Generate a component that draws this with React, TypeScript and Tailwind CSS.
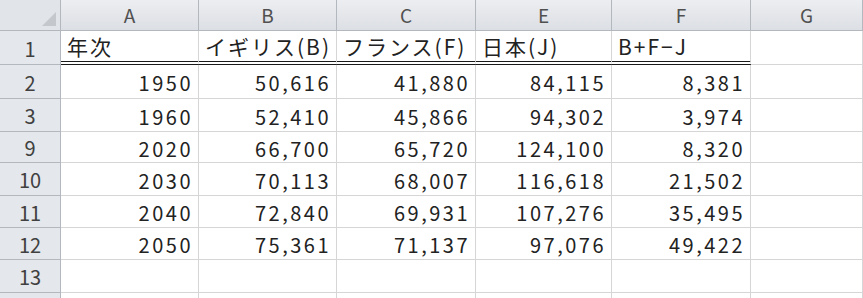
import React from 'react';

const cols = ['A', 'B', 'C', 'E', 'F', 'G'];

const header = ['年次', 'イギリス(B)', 'フランス(F)', '日本(J)', 'B+F−J', ''];

const rows: { n: string; h: string; cells: string[] }[] = [
  { n: '2', h: 'h-[34px]', cells: ['1950', '50,616', '41,880', '84,115', '8,381', ''] },
  { n: '3', h: 'h-[33px]', cells: ['1960', '52,410', '45,866', '94,302', '3,974', ''] },
  { n: '9', h: 'h-[31px]', cells: ['2020', '66,700', '65,720', '124,100', '8,320', ''] },
  { n: '10', h: 'h-[33px]', cells: ['2030', '70,113', '68,007', '116,618', '21,502', ''] },
  { n: '11', h: 'h-[32px]', cells: ['2040', '72,840', '69,931', '107,276', '35,495', ''] },
  { n: '12', h: 'h-[32px]', cells: ['2050', '75,361', '71,137', '97,076', '49,422', ''] },
  { n: '13', h: 'h-[33px]', cells: ['', '', '', '', '', ''] },
  { n: '', h: 'h-[33px]', cells: ['', '', '', '', '', ''] },
];

const widths = ['w-[138px]', 'w-[138px]', 'w-[139px]', 'w-[136px]', 'w-[139px]', 'flex-1'];

const RowHead = ({ label, h }: { label: string; h: string }) => (
  <div className={`${h} w-[61px] shrink-0 flex items-center justify-center pt-[2px] bg-[#e4e7eb] border-r border-b border-[#b3b8bf] text-[20px] text-[#404040]`}>
    {label}
  </div>
);

export default function App() {
  return (
    <div
      className="w-[863px] h-[298px] overflow-hidden bg-white text-[#222]"
      style={{ fontFamily: '"Noto Sans CJK JP", "Noto Sans", sans-serif' }}
    >
      {/* column letters */}
      <div className="flex h-[31px]">
        <div className="w-[61px] shrink-0 relative bg-[#e1e4e8] border-r border-b border-[#b3b8bf]">
          <div className="absolute right-[4px] bottom-[4px] w-0 h-0 border-l-[14px] border-l-transparent border-b-[14px] border-b-[#c4c8cd]" />
        </div>
        {cols.map((c, i) => (
          <div
            key={c}
            className={`${widths[i]} shrink-0 flex items-center justify-center bg-gradient-to-b from-[#eceef1] to-[#dcdfe4] border-r border-b border-[#b3b8bf] text-[19px] text-[#505050]`}
          >
            {c}
          </div>
        ))}
      </div>

      {/* row 1 with double underline */}
      <div className="flex">
        <RowHead label="1" h="h-[34px]" />
        {header.map((t, i) => (
          <div
            key={i}
            className={`${widths[i]} shrink-0 h-[34px] flex items-center px-[6px] pt-[2px] border-r border-[#d6d6d6] text-[21px] tracking-[2px] whitespace-nowrap ${
              i < 5 ? 'border-b-4 border-b-[#1a1a1a] border-double' : 'border-b border-b-[#d6d6d6]'
            }`}
          >
            {t}
          </div>
        ))}
      </div>

      {rows.map((r, ri) => (
        <div key={ri} className="flex">
          <RowHead label={r.n} h={r.h} />
          {r.cells.map((v, i) => (
            <div
              key={i}
              className={`${widths[i]} ${r.h} shrink-0 flex items-center justify-end pr-[5px] pt-[3px] border-r border-b border-[#d6d6d6] text-[20px] tracking-[2.5px]`}
            >
              {v}
            </div>
          ))}
        </div>
      ))}
    </div>
  );
}
